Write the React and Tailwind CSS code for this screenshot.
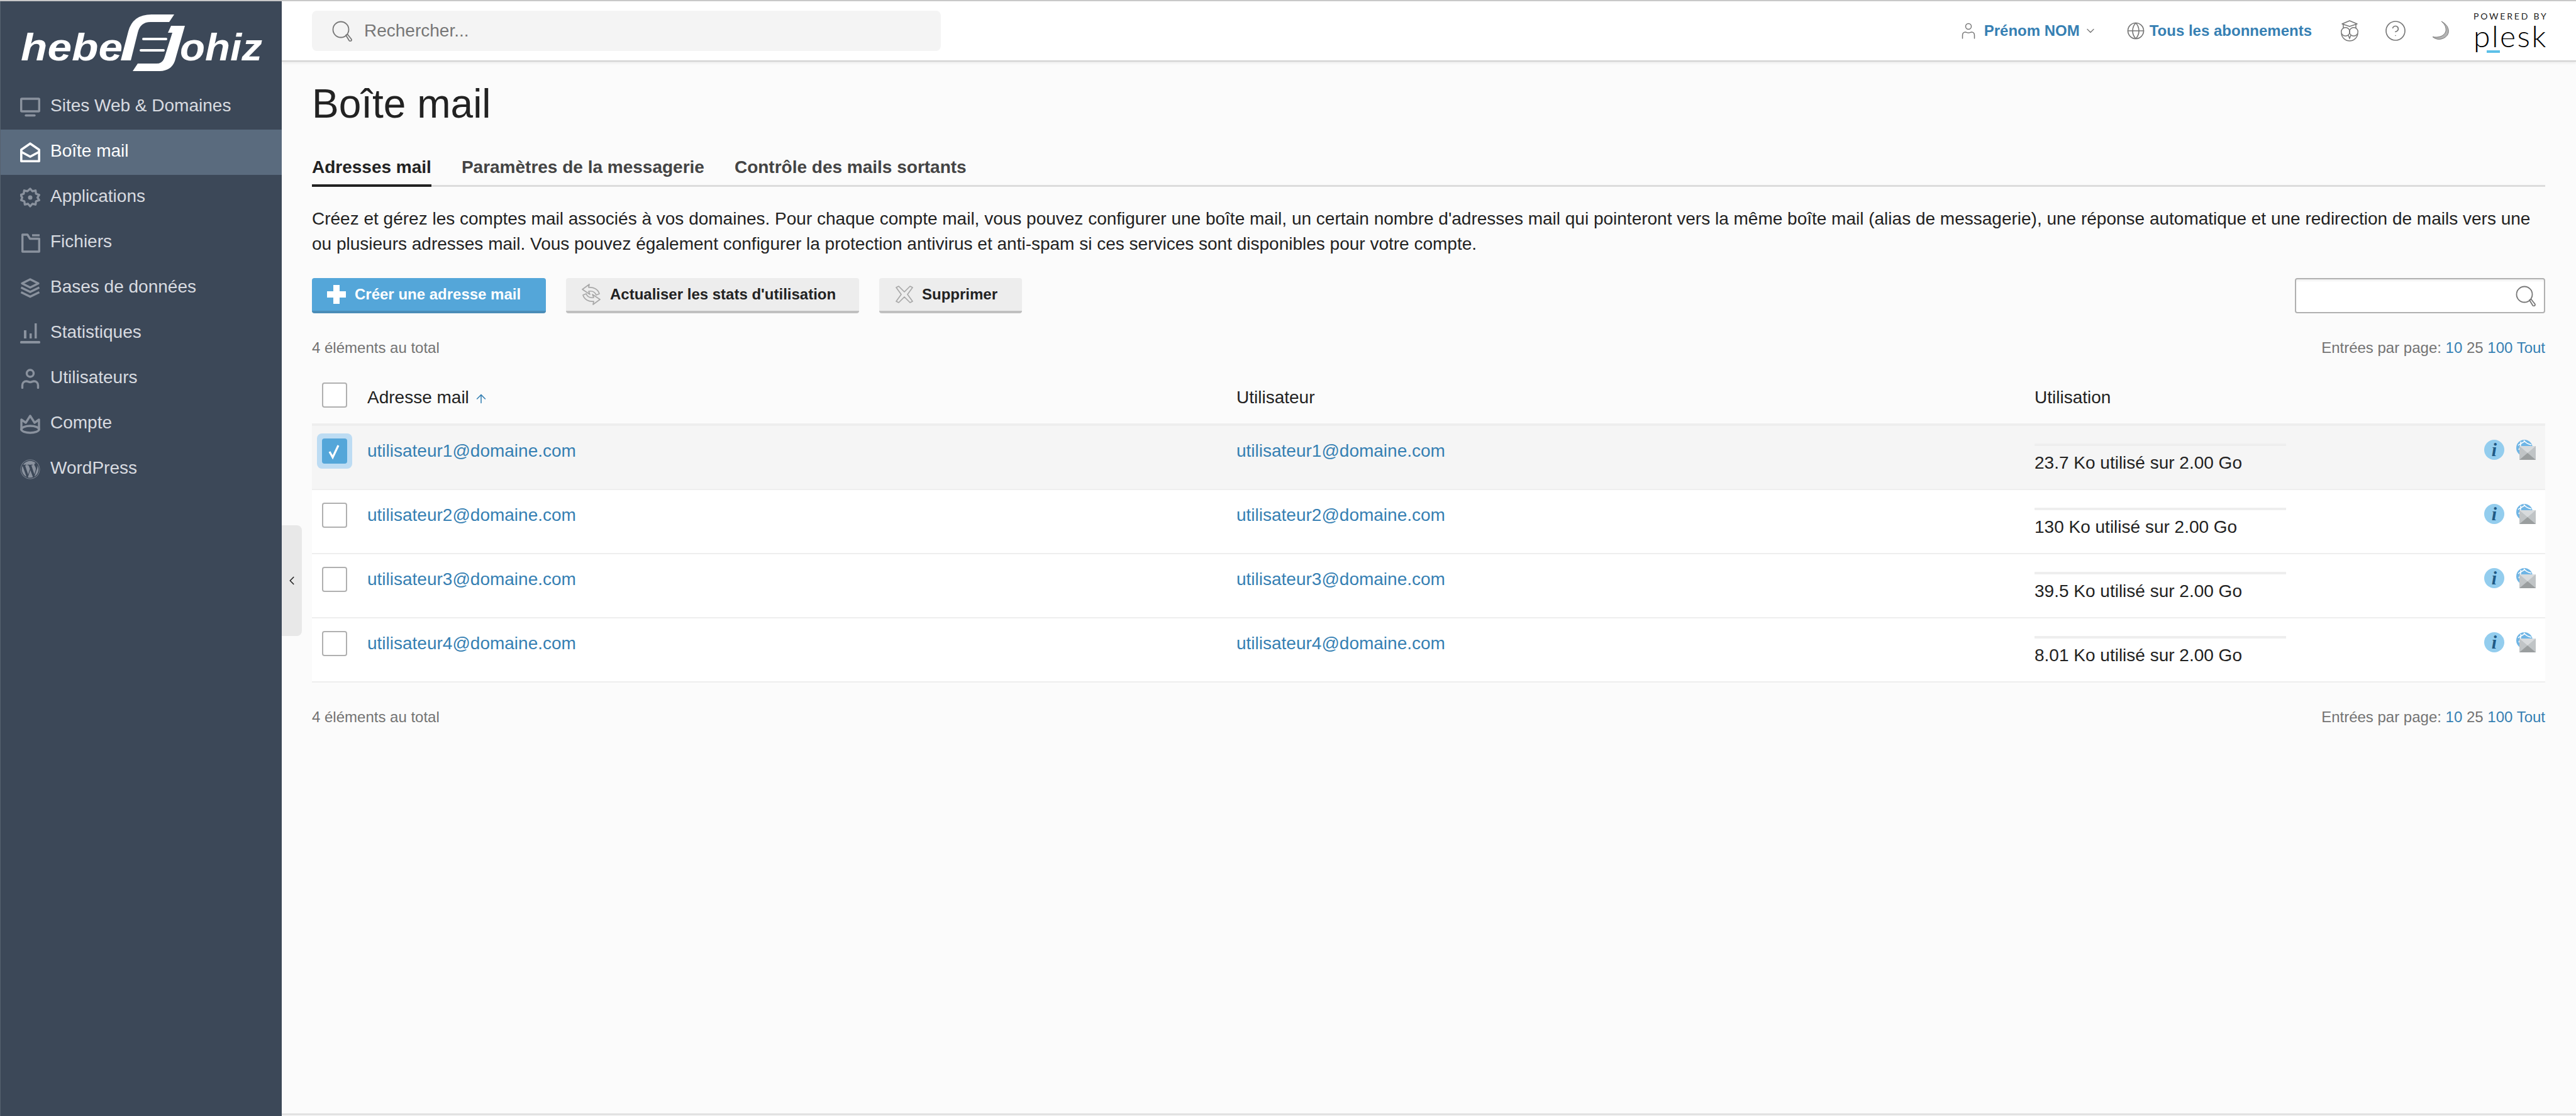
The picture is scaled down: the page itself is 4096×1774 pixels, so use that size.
import React from 'react';
import { CircleHelp, Globe, ChevronDown, ChevronLeft, ArrowUp } from 'lucide-react';
import { FaWordpress } from 'react-icons/fa';

const MonitorIcon = () => (
  <svg width="32" height="32" viewBox="0 0 32 32" fill="none" stroke="currentColor" strokeWidth="3.4">
    <rect x="1.700" y="3" width="28.600" height="20" rx="1" />
    <path d="M9 29.500h14" strokeLinecap="round" />
  </svg>
);

const MailOpenIcon = () => (
  <svg width="32" height="32" viewBox="0 0 32 32" fill="none" stroke="currentColor" strokeWidth="3.600">
    <path d="M1.800 12 16 2.200 30.200 12v18.200H1.800z" strokeLinejoin="round" />
    <path d="M2 15.500 16 23l14-7.500" />
  </svg>
);

const GearIcon = () => (
  <svg width="32" height="32" viewBox="0 0 32 32" fill="none" stroke="currentColor" strokeWidth="3.400" strokeLinejoin="round">
    <path d="M16 2l3.500 4 5-1.200.8 5.200 5 1.800-2.600 4.200 2.600 4.200-5 1.800-.8 5.200-5-1.200-3.500 4-3.500-4-5 1.200-.8-5.200-5-1.800L3.300 16 .7 11.800l5-1.800.8-5.200 5 1.200z" transform="translate(0 0)" />
    <circle cx="16" cy="16" r="3.500" fill="currentColor" stroke="none" />
  </svg>
);

const FolderIcon = () => (
  <svg width="32" height="32" viewBox="0 0 32 32" fill="none" stroke="currentColor" strokeWidth="3.400">
    <path d="M3.700 30V3h8l4 6.500h14.600V30z" strokeLinejoin="round" />
    <path d="M19 4h12" />
  </svg>
);

const LayersIcon = () => (
  <svg width="32" height="32" viewBox="0 0 32 32" fill="none" stroke="currentColor" strokeWidth="3.400">
    <path d="M16 2 29 8.500 16 15 3 8.500z" strokeLinejoin="round" />
    <path d="M1.500 15l14.500 7 14.500-7" />
    <path d="M1.500 22.500l14.500 7 14.500-7" />
  </svg>
);

const StatsIcon = () => (
  <svg width="32" height="32" viewBox="0 0 32 32" fill="currentColor">
    <rect x="6" y="11" width="4" height="13" />
    <rect x="15" y="16" width="3.500" height="8" />
    <rect x="23" y="0" width="3.500" height="24" />
    <rect x="0" y="28" width="32" height="4" rx="1.500" />
  </svg>
);

const UserIcon = () => (
  <svg width="32" height="32" viewBox="0 0 32 32" fill="none" stroke="currentColor" strokeWidth="3.400" strokeLinecap="round">
    <circle cx="16" cy="7.500" r="5.500" />
    <path d="M3.500 30.500v-4c0-4 3-6.500 6.500-6.500 2 0 3.500 1.500 6 1.500s4-1.500 6-1.500c3.500 0 6.500 2.500 6.500 6.500v4" />
  </svg>
);

const CrownIcon = () => (
  <svg width="32" height="32" viewBox="0 0 32 32" fill="none" stroke="currentColor" strokeWidth="3.400">
    <path d="M2 26V9l7 5 7-11 7 11 7-5v17" strokeLinejoin="round" />
    <ellipse cx="16" cy="24.500" rx="14" ry="5.500" />
  </svg>
);

const LensIcon = () => (
  <svg width="32" height="33" viewBox="0 0 32 33" fill="none" stroke="#777" strokeWidth="1.800">
    <circle cx="14" cy="14" r="12.500" />
    <path d="M22 23l2.500-1.500 6 7.500c.8 1.200.4 2.300-.5 3-.9.600-2 .5-2.800-.5z" strokeLinejoin="round" />
  </svg>
);

const ThinUserIcon = () => (
  <svg width="22" height="26" viewBox="0 0 22 26" fill="none" stroke="#777" strokeWidth="1.500" strokeLinecap="round">
    <circle cx="11" cy="6" r="4.500" />
    <path d="M1.500 25v-5c0-3 2-5 4.500-5 1.800 0 3 1.200 5 1.200s3.200-1.200 5-1.200c2.500 0 4.500 2 4.500 5v5" />
  </svg>
);

const OwlIcon = () => (
  <svg width="30" height="34" viewBox="0 0 30 34" fill="none" stroke="#777" strokeWidth="1.500">
    <path d="M3 6 15 1l12 5-12 4z" strokeLinejoin="round" />
    <path d="M5 7v6M25 7v6" />
    <circle cx="8.500" cy="18.500" r="6.800" />
    <circle cx="21.500" cy="18.500" r="6.800" />
    <path d="M2 21c.5 7 6.500 12 13 12s12.500-5 13-12" />
    <path d="M13 24l2 5 2-5" />
  </svg>
);

const MoonIcon = () => (
  <svg width="28" height="32" viewBox="0 0 28 32" fill="#b4b4b4" stroke="#777" strokeWidth="1">
    <path d="M15 1c8 4 12.500 11 11 18-1.500 8-15 15-25 6.500C10 27.500 20 24.500 22 16.500 23 10 20 5 15 1z" />
  </svg>
);

const PlusIcon = () => (
  <svg width="30" height="30" viewBox="0 0 30 30" fill="#fff">
    <path d="M10 0h10v10h10v10H20v10H10V20H0V10h10z" />
  </svg>
);

const SyncIcon = () => (
  <svg width="32" height="34" viewBox="0 0 32 34" fill="none" stroke="#a8a8a8" strokeWidth="1.700" strokeLinejoin="round">
    <path d="M2 9 13 1l-1 5c8-1 15 3 17 10l-5 2c-2-5-6-7-12-6l2 5z" />
    <path d="M2 9 13 1l-1 5c8-1 15 3 17 10l-5 2c-2-5-6-7-12-6l2 5z" transform="rotate(180 16 17)" />
  </svg>
);

const CrossIcon = () => (
  <svg width="28" height="28" viewBox="0 0 28 28" fill="none" stroke="#a8a8a8" strokeWidth="1.700" strokeLinejoin="round">
    <path d="M1 3 5 1l9 9 9-9 4 2-8 11 8 11-4 2-9-9-9 9-4-2 8-11z" />
  </svg>
);

const CheckMark = () => (
  <svg width="40" height="40" viewBox="0 0 40 40" fill="none" stroke="#fff" strokeWidth="3.200">
    <path d="M12 21l5 9 9-19" />
  </svg>
);

const InfoBadge = () => (
  <div className="flex h-8 w-8 items-center justify-center rounded-full bg-[#93cdee]">
    <span className="font-['Liberation_Serif',serif] text-[30px] font-bold italic leading-8 text-[#1f5a85]">i</span>
  </div>
);

const MailGlobeIcon = () => (
  <svg width="32" height="32" viewBox="0 0 32 32">
    <circle cx="14" cy="13" r="13" fill="#6fb5e5" />
    <path d="M4 9c5-4 9-5 11-7M13 1c3 4 6 6 12 7M8 3c1 5 0 8-3 13" fill="none" stroke="#fff" strokeWidth="1.500" />
    <path d="M6 10h26v22H6z" fill="#c0c4c6" />
    <path d="M6 10h26L19 21z" fill="#d8dbdd" />
    <path d="M6 32l13-11 13 11z" fill="#9a9e9f" />
  </svg>
);

const Logo = () => (
  <svg width="448" height="132" viewBox="0 0 448 132" className="block" fill="#fff">
    <text x="32" y="94" fontFamily="Liberation Sans, sans-serif" fontWeight="700" fontStyle="italic" fontSize="62" textLength="162" lengthAdjust="spacingAndGlyphs">hebe</text>
    <text x="285" y="94" fontFamily="Liberation Sans, sans-serif" fontWeight="700" fontStyle="italic" fontSize="62" textLength="131" lengthAdjust="spacingAndGlyphs">ohiz</text>
    <path d="M276 21 268 33H238Q222 33 218 50L207 94H191L203 48Q210 21 240 21Z" />
    <path d="M293 39 277 95Q271 111 252 111H210L218 99H248Q258 99 261 88L273 50H266L271 39Z" />
    <path d="M227 60H263M223 78H259" stroke="#fff" strokeWidth="4" strokeLinecap="round" />
  </svg>
);

const navItems = [
  { label: 'Sites Web & Domaines', icon: <MonitorIcon /> },
  { label: 'Boîte mail', icon: <MailOpenIcon />, active: true },
  { label: 'Applications', icon: <GearIcon /> },
  { label: 'Fichiers', icon: <FolderIcon /> },
  { label: 'Bases de données', icon: <LayersIcon /> },
  { label: 'Statistiques', icon: <StatsIcon /> },
  { label: 'Utilisateurs', icon: <UserIcon /> },
  { label: 'Compte', icon: <CrownIcon /> },
  { label: 'WordPress', icon: <FaWordpress size={32} /> },
];

const rows = [
  { mail: 'utilisateur1@domaine.com', usage: '23.7 Ko utilisé sur 2.00 Go', selected: true },
  { mail: 'utilisateur2@domaine.com', usage: '130 Ko utilisé sur 2.00 Go' },
  { mail: 'utilisateur3@domaine.com', usage: '39.5 Ko utilisé sur 2.00 Go' },
  { mail: 'utilisateur4@domaine.com', usage: '8.01 Ko utilisé sur 2.00 Go' },
];

const Sidebar = () => (
  <aside className="w-[448px] shrink-0 border-l border-[#56626f] bg-[#3c4858]">
    <Logo />
    <nav>
      {navItems.map((item) => (
        <div
          key={item.label}
          className={`flex h-[72px] items-center gap-4 pl-[31px] ${
            item.active ? 'bg-[#5a6b7e] text-white' : 'text-[#8a929e]'
          }`}
        >
          <span className="flex h-8 w-8 items-center justify-center">{item.icon}</span>
          <span className={`pb-[5px] text-[28px] leading-9 ${item.active ? 'text-white' : 'text-[#d8dbe0]'}`}>
            {item.label}
          </span>
        </div>
      ))}
    </nav>
  </aside>
);

const Topbar = () => (
  <header className="flex h-[96px] shrink-0 items-center border-b-2 border-[#d2d2d2] bg-white pl-12 pr-[47px] shadow-[0_2px_4px_rgba(0,0,0,0.08)]">
    <div className="flex h-16 w-[1000px] items-center gap-[19px] rounded-lg bg-[#f4f4f4] pl-8">
      <LensIcon />
      <span className="text-[28px] text-[#777]">Rechercher...</span>
    </div>
    <div className="ml-auto flex items-center">
      <ThinUserIcon />
      <span className="ml-[14px] text-2xl font-bold text-[#3680b3]">Prénom NOM</span>
      <ChevronDown size={20} strokeWidth={1.6} className="ml-[7px] text-[#777]" />
      <Globe size={30} strokeWidth={1.3} className="ml-[47px] text-[#777]" />
      <span className="ml-[7px] text-2xl font-bold text-[#3680b3]">Tous les abonnements</span>
      <span className="ml-[45px]"><OwlIcon /></span>
      <CircleHelp size={36} strokeWidth={1.1} className="ml-10 text-[#777]" />
      <span className="ml-10"><MoonIcon /></span>
      <div className="relative ml-[38px] flex w-[116px] flex-col">
        <span className="font-['Lato',sans-serif] text-[14px] leading-[16px] tracking-[2.8px] whitespace-nowrap text-[#222]">POWERED BY</span>
        <span className="font-['Lato',sans-serif] text-[48px] font-light leading-[46px] tracking-[2.5px] text-black">plesk</span>
        <span className="absolute bottom-[-4px] left-[21px] h-1 w-[21px] bg-[#5cc0e8]" />
      </div>
    </div>
  </header>
);

const PageCount = () => (
  <div className="flex h-[30px] items-center justify-between text-2xl leading-[30px] text-[#737373]">
    <span>4 éléments au total</span>
    <span>
      Entrées par page: <span className="text-[#3680b3]">10</span> 25{' '}
      <span className="text-[#3680b3]">100</span> <span className="text-[#3680b3]">Tout</span>
    </span>
  </div>
);

const App = () => (
  <div className="flex h-[1774px] w-[4096px] overflow-hidden border-t-2 border-[#c8c8c8] bg-[#fbfbfb] font-['Liberation_Sans',Arial,sans-serif] text-[#222]">
    <Sidebar />
    <div className="relative flex min-w-0 flex-1 flex-col">
      <Topbar />
      <main className="flex-1 pl-12 pr-[49px]">
        <h1 className="pt-[29px] text-[64px] leading-[76px] text-[#222]">Boîte mail</h1>

        <div className="mt-[45px] flex gap-12 border-b-[3px] border-[#dcdcdc] text-[28px] font-bold leading-9 text-[#444]">
          <span className="relative pb-[10px] text-[#222]">
            Adresses mail
            <span className="absolute bottom-[-3px] left-0 h-1 w-full bg-[#222]" />
          </span>
          <span className="pb-[10px]">Paramètres de la messagerie</span>
          <span className="pb-[10px]">Contrôle des mails sortants</span>
        </div>

        <p className="mt-[31px] text-[28px] leading-10 text-[#222]">
          Créez et gérez les comptes mail associés à vos domaines. Pour chaque compte mail, vous pouvez configurer une boîte mail, un certain nombre d'adresses mail qui pointeront vers la même boîte mail (alias de messagerie), une réponse automatique et une redirection de mails vers une ou plusieurs adresses mail. Vous pouvez également configurer la protection antivirus et anti-spam si ces services sont disponibles pour votre compte.
        </p>

        <div className="mt-[34px] flex h-14 items-stretch">
          <button className="flex w-[372px] items-center gap-[14px] rounded border-b-4 border-[#4a8db8] bg-[#54a6d9] pl-6 text-2xl font-bold text-white">
            <PlusIcon />
            Créer une adresse mail
          </button>
          <button className="ml-8 flex w-[466px] items-center gap-[14px] rounded border-b-4 border-[#c0c0c0] bg-[#ededed] pl-6 text-2xl font-bold text-[#222]">
            <SyncIcon />
            Actualiser les stats d'utilisation
          </button>
          <button className="ml-8 flex w-[227px] items-center gap-[14px] rounded border-b-4 border-[#c0c0c0] bg-[#ededed] pl-[26px] text-2xl font-bold text-[#222]">
            <CrossIcon />
            Supprimer
          </button>
          <div className="ml-auto flex w-[398px] items-center justify-end rounded border-2 border-[#b0b0b0] bg-white pr-[13px] shadow-[inset_0_3px_3px_rgba(0,0,0,0.05)]">
            <LensIcon />
          </div>
        </div>

        <div className="mt-10">
          <PageCount />
        </div>

        <div className="grid h-[105px] grid-cols-[88px_1382px_1269px_1fr] text-[28px] leading-9 text-[#222]">
          <div className="pl-4 pt-10">
            <div className="h-10 w-10 rounded border-2 border-[#b0b0b0] bg-white" />
          </div>
          <div className="flex items-center gap-2 self-start pt-[46px]">
            Adresse mail
            <ArrowUp size={22} strokeWidth={1.7} className="mt-1 text-[#3680b3]" />
          </div>
          <div className="pt-[46px]">Utilisateur</div>
          <div className="pt-[46px]">Utilisation</div>
        </div>

        <div className="border-t-4 border-[#eee]">
          {rows.map((row) => (
            <div
              key={row.mail}
              className={`grid h-[102px] grid-cols-[88px_1382px_1269px_1fr] border-b-2 border-[#eee] text-[28px] leading-10 ${
                row.selected ? 'bg-[#f5f5f5]' : 'bg-white'
              }`}
            >
              <div className="pl-4 pt-5">
                {row.selected ? (
                  <div className="-ml-2 -mt-2 flex h-14 w-14 items-center justify-center rounded-lg bg-[#bddcf3]">
                    <div className="h-10 w-10 rounded bg-[#54a6d9]">
                      <CheckMark />
                    </div>
                  </div>
                ) : (
                  <div className="h-10 w-10 rounded border-2 border-[#b0b0b0] bg-white" />
                )}
              </div>
              <div className="pt-5 text-[#3680b3]">{row.mail}</div>
              <div className="pt-5 text-[#3680b3]">{row.mail}</div>
              <div className="flex">
                <div className="w-[400px] pt-7 leading-9 text-[#222]">
                  <div className="h-1 w-full bg-[#eee]" />
                  <div className="mt-[9px] whitespace-nowrap">{row.usage}</div>
                </div>
                <div className="ml-auto flex items-start gap-[18px] pr-[15px] pt-[22px]">
                  <InfoBadge />
                  <MailGlobeIcon />
                </div>
              </div>
            </div>
          ))}
        </div>

        <div className="mt-10">
          <PageCount />
        </div>
      </main>

      <div className="h-1 shrink-0 border-t-2 border-[#dcdcdc] bg-[#f0f0f0]" />

      <div className="absolute left-0 top-[833px] flex h-[176px] w-8 items-center rounded-r-lg bg-[#e8e8e8] pl-[5px]">
        <ChevronLeft size={22} strokeWidth={1.8} className="text-[#222]" />
      </div>
    </div>
  </div>
);

export default App;
